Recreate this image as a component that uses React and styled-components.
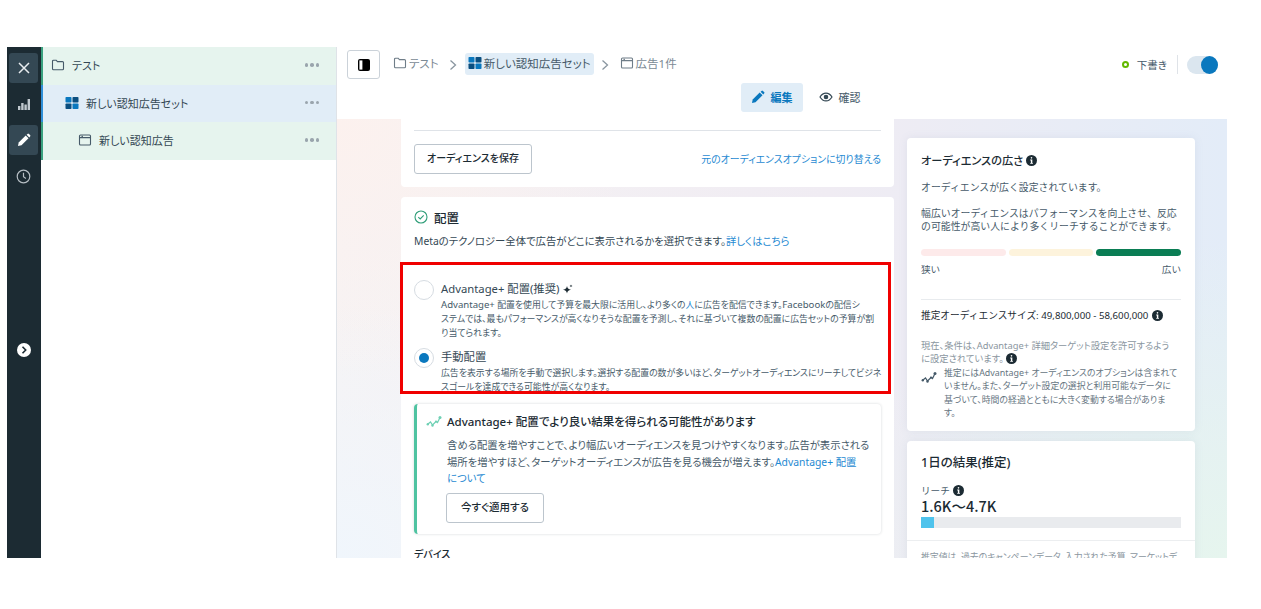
import React from "react";
import styled, {createGlobalStyle} from "styled-components";

const GlobalStyle = createGlobalStyle`
    html, body {
        margin : 0;
        padding : 0;
        background : #fff;
    }
    body {
        font-family : "Noto Sans", "Noto Sans CJK JP", sans-serif;
        color : #1c2b33;
    }
`;

const Page = styled.div`
    width : 1261px;
    height : 609px;
    padding : 47px 34px 51px 7px;
    box-sizing : border-box;
    overflow : hidden;
`;

const Frame = styled.div`
    display : flex;
    width : 100%;
    height : 100%;
`;

const Rail = styled.nav`
    width : 34px;
    flex : none;
    background : #1c2b33;
    display : flex;
    flex-direction : column;
    align-items : center;
    padding : 6px 1px 0 0;
    box-sizing : border-box;
`;

const RailButton = styled.button`
    width : 29px;
    height : 30px;
    margin-bottom : ${props => props.$gap}px;
    padding : 0;
    border : none;
    border-radius : 3px;
    background : ${props => props.$active ? "#344854" : "transparent"};
    display : flex;
    align-items : center;
    justify-content : center;
`;

const Tree = styled.aside`
    width : 295px;
    flex : none;
    border-right : 1px solid #dfe3e8;
    box-sizing : content-box;
`;

const TreeRow = styled.div`
    height : 37.7px;
    display : flex;
    align-items : center;
    gap : 7px;
    padding : 0 17px 2px ${props => props.$indent}px;
    box-sizing : border-box;
    border-left : 2px solid ${props => props.$blue ? "#2f8fd8" : "#3aa17e"};
    background : ${props => props.$blue ? "#e1edf7" : "#e6f4ee"};
    font-size : 11px;
    font-feature-settings : "palt";
    color : #344854;
`;

const TreeLabel = styled.span`
    flex : 1;
`;

const Dots = styled.span`
    display : flex;
    gap : 2px;

    i {
        width : 3.5px;
        height : 3.5px;
        border-radius : 50%;
        background : #9aa5ad;
    }
`;

const Main = styled.main`
    flex : 1;
    min-width : 0;
    display : flex;
    flex-direction : column;
`;

const TopBar = styled.header`
    height : 72px;
    flex : none;
    background : #fff;
    box-sizing : border-box;
    padding : 3px 9px 0 10px;
    font-feature-settings : "palt";
`;

const TopRow = styled.div`
    display : flex;
    align-items : center;
    height : 29px;
`;

const PanelButton = styled.button`
    width : 33px;
    height : 29px;
    padding : 0;
    margin-right : 10px;
    background : #fff;
    border : 1px solid #cbd2d9;
    border-radius : 3px;
    display : flex;
    align-items : center;
    justify-content : center;
`;

const Crumb = styled.span`
    display : flex;
    align-items : center;
    gap : 2px;
    height : 22px;
    padding : 0 3px 2px;
    box-sizing : border-box;
    margin-bottom : 1px;
    border-radius : 3px;
    font-size : 11.5px;
    color : ${props => props.$current ? "#465a69" : "#7b8a95"};
    background : ${props => props.$current ? "#e1edf7" : "transparent"};
`;

const CrumbSep = styled.span`
    width : 23px;
    display : flex;
    justify-content : center;
`;

const Status = styled.div`
    margin-left : auto;
    display : flex;
    align-items : center;
    font-size : 10.5px;
    color : #465a69;
`;

const StatusDot = styled.i`
    width : 3px;
    height : 3px;
    border : 2px solid #63b800;
    border-radius : 50%;
    margin-right : 8px;
`;

const StatusLine = styled.i`
    width : 1px;
    height : 19px;
    margin : 0 9px 0 10px;
    background : #dfe3e8;
`;

const Toggle = styled.span`
    width : 31px;
    height : 18px;
    border-radius : 9px;
    background : #dbe6ef;
    display : flex;
    justify-content : flex-end;

    i {
        width : 17px;
        height : 18px;
        border-radius : 50%;
        background : #0a78be;
    }
`;

const Tabs = styled.div`
    display : flex;
    justify-content : center;
    gap : 6px;
    padding-left : 46px;
    margin-top : 4px;
`;

const Tab = styled.span`
    width : ${props => props.$width}px;
    height : 29px;
    padding-bottom : 2px;
    box-sizing : border-box;
    display : flex;
    align-items : center;
    justify-content : center;
    gap : 6px;
    border-radius : 3px;
    font-size : 11px;
    font-weight : ${props => props.$active ? 700 : 400};
    color : ${props => props.$active ? "#0a78be" : "#465a69"};
    background : ${props => props.$active ? "#e1edf7" : "transparent"};
`;

const Content = styled.div`
    flex : 1;
    min-height : 0;
    overflow : hidden;
    display : flex;
    gap : 13px;
    padding-left : 64px;
    background :
        radial-gradient(ellipse 400px 320px at 100% 100%, #e6f5ee 0%, rgba(230,245,238,0) 100%),
        radial-gradient(ellipse 300px 260px at 0% 0%, #fcf1ee 0%, rgba(252,241,238,0) 100%),
        radial-gradient(ellipse 300px 260px at 0% 100%, #f0f6fc 0%, rgba(240,246,252,0) 100%),
        linear-gradient(90deg, #f6f3f4 0%, #f0ecf3 55%, #e3ecf8 100%);
`;

const LeftColumn = styled.div`
    width : 493px;
    flex : none;
    display : flex;
    flex-direction : column;
    gap : 10px;
    font-feature-settings : "palt";
`;

const RightColumn = styled.div`
    width : 288px;
    flex : none;
    padding-top : 19px;
    display : flex;
    flex-direction : column;
    gap : 10px;
`;

const Card = styled.section`
    background : #fff;
    border-radius : ${props => props.$flatTop ? "0 0 4px 4px" : "4px"};
    flex : none;
`;

const AudienceFoot = styled.div`
    margin : 11px 13px 0;
    padding : 13px 0 14px;
    height : 57px;
    box-sizing : border-box;
    border-top : 1px solid #dfe3e8;
    display : flex;
    justify-content : space-between;
    align-items : center;
`;

const OutlineButton = styled.button`
    width : ${props => props.$width}px;
    height : ${props => props.$height}px;
    padding : 0 0 2px;
    background : #fff;
    border : 1px solid #bcc5cd;
    border-radius : 3px;
    font-family : inherit;
    font-feature-settings : "palt";
    font-size : ${props => props.$size}px;
    font-weight : 500;
    color : #1c2b33;
`;

const Link = styled.a`
    color : #1f8ad2;
`;

const SwitchLink = styled(Link)`
    font-size : 9.9px;
`;

const PlacementHead = styled.div`
    display : flex;
    align-items : center;
    gap : 6px;
    padding : 12px 13px 0;
    height : 16px;
    font-size : 12.5px;
    font-weight : 500;
`;

const PlacementText = styled.p`
    margin : 8px 13px 0;
    font-size : 10.35px;
    line-height : 16px;
    color : #344854;
    white-space : nowrap;
`;

const RedBox = styled.div`
    margin : 13px 3px 0 -1px;
    height : 132px;
    box-sizing : border-box;
    border : 3px solid #f00000;
    padding : 13px 0 0 11px;
    overflow : hidden;
`;

const RadioRow = styled.div`
    display : flex;
    gap : 7px;
    margin-bottom : ${props => props.$gap}px;
`;

const Radio = styled.span`
    width : 20px;
    height : 20px;
    margin-top : 2px;
    box-sizing : border-box;
    flex : none;
    border : 1px solid #d6dce2;
    border-radius : 50%;
    display : flex;
    align-items : center;
    justify-content : center;

    i {
        width : 10px;
        height : 10px;
        border-radius : 50%;
        background : #0a78be;
    }
`;

const RadioBody = styled.div`
    padding-top : 2px;
`;

const RadioTitle = styled.div`
    display : flex;
    align-items : center;
    gap : 3px;
    font-size : 11.3px;
    line-height : 18px;
    color : #344854;
`;

const RadioText = styled.div`
    font-size : 8.9px;
    line-height : 14px;
    color : #465a69;
    white-space : nowrap;
`;

const RadioLatin = styled.span`
    font-size : 9.6px;
`;

const Notice = styled.div`
    margin : 10px 13px 0 13px;
    height : 130px;
    box-sizing : border-box;
    border-left : 3px solid #4fc3a1;
    border-radius : 4px;
    padding : 9px 10px 0 9px;
    box-shadow : 0 0 3px rgba(28, 43, 51, 0.18);
`;

const NoticeHead = styled.div`
    display : flex;
    align-items : center;
    gap : 5px;
    font-size : 11.5px;
    line-height : 17px;
    font-weight : 500;
`;

const NoticeBody = styled.div`
    margin : 7px 0 6px 21px;
    font-size : 10.35px;
    line-height : 16.5px;
    color : #465a69;
    white-space : nowrap;
`;

const NoticeAction = styled.div`
    padding-left : 20px;
`;

const DeviceLabel = styled.div`
    margin : 12px 13px 0;
    font-size : 10px;
    font-weight : 500;
`;

const SideCard = styled(Card)`
    padding : ${props => props.$padTop}px 14px 14px;
    height : ${props => props.$height}px;
    box-sizing : border-box;
    box-shadow : 0 0 8px rgba(120, 140, 170, 0.12);
`;

const SideTitle = styled.h3`
    margin : 0;
    display : flex;
    align-items : center;
    gap : 3px;
    font-size : ${props => props.$size}px;
    font-feature-settings : "palt";
    line-height : 17px;
    font-weight : 500;
`;

const SideText = styled.p`
    margin : ${props => props.$top}px 0 0;
    font-size : 9.9px;
    line-height : 13.5px;
    color : #465a69;
    white-space : nowrap;
`;

const FinePrint = styled(SideText)`
    font-size : ${props => props.$size}px;
    font-feature-settings : "palt";
    color : ${props => props.$color};
`;

const WidthBars = styled.div`
    display : flex;
    gap : 3px;
    margin-top : 15px;
`;

const WidthBar = styled.i`
    flex : 1;
    height : 7px;
    border-radius : 4px;
    background : ${props => props.$color};
`;

const BarLabels = styled.div`
    display : flex;
    justify-content : space-between;
    margin-top : 7px;
    font-size : 9.6px;
    line-height : 13px;
    color : #465a69;
`;

const SideRule = styled.hr`
    border : none;
    border-top : 1px solid #e8ebee;
    margin : 23px 0 0;
`;

const SizeLine = styled.div`
    margin-top : 9px;
    display : flex;
    align-items : center;
    gap : 4px;
    font-size : 9.7px;
    line-height : 14px;
    color : #1c2b33;
`;

const InlineInfo = styled.span`
    display : inline-flex;
    vertical-align : -2px;
    margin-left : 2px;
`;

const EstimateNote = styled.div`
    display : flex;
    gap : 5px;
`;

const NoteIcon = styled.span`
    width : 18px;
    padding-top : 2px;
    flex : none;
`;

const ReachLabel = styled.div`
    display : flex;
    align-items : center;
    gap : 3px;
    margin-top : 13px;
    font-size : 9.6px;
    line-height : 13px;
    color : #465a69;
`;

const ReachValue = styled.div`
    font-family : "Noto Sans CJK JP", sans-serif;
    font-size : 14.5px;
    line-height : 18px;
    font-weight : 500;
`;

const ReachTrack = styled.div`
    margin-top : 2px;
    height : 11px;
    background : #e9ebee;

    i {
        display : block;
        width : 13px;
        height : 11px;
        background : #4fc3ec;
    }
`;

const ReachRule = styled.hr`
    border : none;
    border-top : 1px solid #eceef0;
    margin : 12px -14px 0;
`;

function FolderIcon({color = "#465a69", size = 14}){
    return (
        <svg width={size} height={size} viewBox="0 0 14 14" fill="none" stroke={color} strokeWidth="1.1">
            <path d="M1.5 3.2a1 1 0 0 1 1-1h2.6l1.3 1.4h5.1a1 1 0 0 1 1 1v6.2a1 1 0 0 1-1 1h-9a1 1 0 0 1-1-1z" strokeLinejoin="round" />
        </svg>
    );
}

function AdSetIcon({size = 14}){
    return (
        <svg width={size} height={size} viewBox="0 0 14 14">
            <rect x="0.5" y="1" width="6" height="5.5" rx="0.8" fill="#0a78be" />
            <rect x="7.5" y="1" width="6" height="5.5" rx="0.8" fill="#0b4f80" />
            <rect x="0.5" y="7.5" width="6" height="5.5" rx="0.8" fill="#0b4f80" />
            <rect x="7.5" y="7.5" width="6" height="5.5" rx="0.8" fill="#0a78be" />
        </svg>
    );
}

function AdIcon({color = "#465a69", size = 14}){
    return (
        <svg width={size} height={size} viewBox="0 0 14 14" fill="none" stroke={color} strokeWidth="1.1">
            <rect x="1.5" y="2" width="11" height="10" rx="1" />
            <path d="M1.5 4.6h11M3.5 3.4h1.4" />
        </svg>
    );
}

function InfoIcon({size = 11, color = "#1c2b33"}){
    return (
        <svg width={size} height={size} viewBox="0 0 12 12">
            <circle cx="6" cy="6" r="6" fill={color} />
            <rect x="5.1" y="2.2" width="1.8" height="1.8" rx="0.9" fill="#fff" />
            <path d="M4.6 5h2.3v3.6h.7v1H4.6v-1h.7V6h-.7z" fill="#fff" />
        </svg>
    );
}

function TrendIcon({color = "#465a69"}){
    return (
        <svg width="16" height="14" viewBox="0 0 16 14" fill="none" stroke={color} strokeWidth="1.2">
            <path d="M2 9 4.5 7 6.5 10 10 6.5 11.5 7.500 14 2.500" />
            <circle cx="14" cy="2.5" r="1.5" fill={color} stroke="none" />
            <circle cx="10" cy="6.5" r="1.1" fill={color} stroke="none" />
            <circle cx="6.5" cy="10.5" r="1.2" fill={color} stroke="none" />
            <circle cx="1.8" cy="9.2" r="1.2" fill={color} stroke="none" />
        </svg>
    );
}

function PencilIcon({color = "#fff", size = 14}){
    return (
        <svg width={size} height={size} viewBox="0 0 14 14" fill={color}>
            <path d="M1 13l.7-3.5 7-7 2.8 2.8-7 7z" />
            <path d="M9.6 1.7l.9-.8a1 1 0 0 1 1.4 0l1.2 1.2a1 1 0 0 1 0 1.4l-.8.9z" />
        </svg>
    );
}

function Chevron({color = "#8a96a0"}){
    return (
        <svg width="8" height="12" viewBox="0 0 8 12" fill="none" stroke={color} strokeWidth="1.3">
            <path d="M1.5 1.5 6.5 6l-5 4.5" />
        </svg>
    );
}

function DotsMenu(){
    return <Dots><i /><i /><i /></Dots>;
}

function App(){
    return (
        <Page>
            <GlobalStyle />
            <Frame>
                <Rail>
                    <RailButton $active $gap={6}>
                        <svg width="12" height="12" viewBox="0 0 12 12" stroke="#e8ecef" strokeWidth="1.5">
                            <path d="M1 1l10 10M11 1 1 11" />
                        </svg>
                    </RailButton>
                    <RailButton $gap={6}>
                        <svg width="14" height="14" viewBox="0 0 14 14" fill="#c0c8ce">
                            <rect x="1" y="9" width="2.4" height="4" />
                            <rect x="4.2" y="6" width="2.4" height="7" />
                            <rect x="7.4" y="7.5" width="2.4" height="5.5" />
                            <rect x="10.6" y="2" width="2.4" height="11" />
                        </svg>
                    </RailButton>
                    <RailButton $active $gap={6}>
                        <PencilIcon />
                    </RailButton>
                    <RailButton $gap={144}>
                        <svg width="15" height="15" viewBox="0 0 15 15" fill="none" stroke="#b6bec4" strokeWidth="1.2">
                            <circle cx="7.5" cy="7.5" r="6.3" />
                            <path d="M7.5 3.8v4l2.4 1.6" />
                        </svg>
                    </RailButton>
                    <RailButton $gap={0}>
                        <svg width="14" height="14" viewBox="0 0 14 14">
                            <circle cx="7" cy="7" r="7" fill="#fff" />
                            <path d="M5.5 3.8 8.7 7l-3.2 3.2" fill="none" stroke="#1c2b33" strokeWidth="1.6" />
                        </svg>
                    </RailButton>
                </Rail>

                <Tree>
                    <TreeRow $indent={8}>
                        <FolderIcon /><TreeLabel>テスト</TreeLabel><DotsMenu />
                    </TreeRow>
                    <TreeRow $blue $indent={22}>
                        <AdSetIcon /><TreeLabel>新しい認知広告セット</TreeLabel><DotsMenu />
                    </TreeRow>
                    <TreeRow $indent={35}>
                        <AdIcon /><TreeLabel>新しい認知広告</TreeLabel><DotsMenu />
                    </TreeRow>
                </Tree>

                <Main>
                    <TopBar>
                        <TopRow>
                            <PanelButton>
                                <svg width="14" height="14" viewBox="0 0 14 14">
                                    <rect x="1" y="1" width="12" height="12" rx="2" fill="#000" />
                                    <rect x="2.4" y="2.4" width="3" height="9.2" fill="#fff" />
                                </svg>
                            </PanelButton>
                            <Crumb><FolderIcon color="#6f7d88" />テスト</Crumb>
                            <CrumbSep><Chevron /></CrumbSep>
                            <Crumb $current><AdSetIcon />新しい認知広告セット</Crumb>
                            <CrumbSep><Chevron /></CrumbSep>
                            <Crumb><AdIcon color="#6f7d88" />広告1件</Crumb>
                            <Status>
                                <StatusDot />下書き<StatusLine />
                                <Toggle><i /></Toggle>
                            </Status>
                        </TopRow>
                        <Tabs>
                            <Tab $active $width={62}><PencilIcon color="#0a78be" />編集</Tab>
                            <Tab $width={62}>
                                <svg width="14" height="14" viewBox="0 0 14 14" fill="none" stroke="#344854" strokeWidth="1.2">
                                    <path d="M1 7c1.6-2.6 3.6-3.9 6-3.9s4.4 1.3 6 3.9c-1.6 2.6-3.6 3.9-6 3.9S2.6 9.6 1 7z" />
                                    <circle cx="7" cy="7" r="1.7" fill="#344854" />
                                </svg>
                                確認
                            </Tab>
                        </Tabs>
                    </TopBar>

                    <Content>
                        <LeftColumn>
                            <Card $flatTop>
                                <AudienceFoot>
                                    <OutlineButton $width={118} $height={30} $size={10}>オーディエンスを保存</OutlineButton>
                                    <SwitchLink>元のオーディエンスオプションに切り替える</SwitchLink>
                                </AudienceFoot>
                            </Card>
                            <Card>
                                <PlacementHead>
                                    <svg width="14" height="14" viewBox="0 0 14 14" fill="none" stroke="#2f9d78" strokeWidth="1.1">
                                        <circle cx="7" cy="7" r="6" />
                                        <path d="M4.3 7.2 6.2 9l3.5-3.7" />
                                    </svg>
                                    配置
                                </PlacementHead>
                                <PlacementText>
                                    Metaのテクノロジー全体で広告がどこに表示されるかを選択できます。<Link>詳しくはこちら</Link>
                                </PlacementText>
                                <RedBox>
                                    <RadioRow $gap={6}>
                                        <Radio />
                                        <RadioBody>
                                            <RadioTitle>
                                                Advantage+ 配置(推奨)
                                                <svg width="11" height="11" viewBox="0 0 11 11" fill="#1c2b33">
                                                    <path d="M5 2c.5 2.4 1.2 3.1 4 3.7-2.8.6-3.5 1.3-4 3.8-.5-2.5-1.2-3.2-4-3.8C3.8 5.1 4.5 4.4 5 2z" />
                                                    <path d="M9 .5c.2.9.5 1.2 1.5 1.4-1 .2-1.3.5-1.5 1.4-.2-.9-.5-1.2-1.500-1.400C8.500 1.700 8.800 1.400 9 .5z" />
                                                </svg>
                                            </RadioTitle>
                                            <RadioText>
                                                <RadioLatin>Advantage+</RadioLatin> 配置を使用して予算を最大限に活用し、より多くの<Link>人</Link>に広告を配信できます。<RadioLatin>Facebook</RadioLatin>の配信シ<br />
                                                ステムでは、最もパフォーマンスが高くなりそうな配置を予測し、それに基づいて複数の配置に広告セットの予算が割<br />
                                                り当てられます。
                                            </RadioText>
                                        </RadioBody>
                                    </RadioRow>
                                    <RadioRow $gap={0}>
                                        <Radio><i /></Radio>
                                        <RadioBody>
                                            <RadioTitle>手動配置</RadioTitle>
                                            <RadioText>
                                                広告を表示する場所を手動で選択します。選択する配置の数が多いほど、ターゲットオーディエンスにリーチしてビジネ<br />
                                                スゴールを達成できる可能性が高くなります。
                                            </RadioText>
                                        </RadioBody>
                                    </RadioRow>
                                </RedBox>
                                <Notice>
                                    <NoticeHead>
                                        <TrendIcon color="#6fd0b4" />
                                        Advantage+ 配置でより良い結果を得られる可能性があります
                                    </NoticeHead>
                                    <NoticeBody>
                                        含める配置を増やすことで、より幅広いオーディエンスを見つけやすくなります。広告が表示される<br />
                                        場所を増やすほど、ターゲットオーディエンスが広告を見る機会が増えます。<Link>Advantage+ 配置<br />について</Link>
                                    </NoticeBody>
                                    <NoticeAction>
                                        <OutlineButton $width={98} $height={30} $size={10.5}>今すぐ適用する</OutlineButton>
                                    </NoticeAction>
                                </Notice>
                                <DeviceLabel>デバイス</DeviceLabel>
                            </Card>
                        </LeftColumn>

                        <RightColumn>
                            <SideCard $height={293} $padTop={14}>
                                <SideTitle $size={11.2}>オーディエンスの広さ <InfoIcon /></SideTitle>
                                <SideText $top={12}>オーディエンスが広く設定されています。</SideText>
                                <SideText $top={12}>
                                    幅広いオーディエンスはパフォーマンスを向上させ、反応<br />
                                    の可能性が高い人により多くリーチすることができます。
                                </SideText>
                                <WidthBars>
                                    <WidthBar $color="#fdeaea" />
                                    <WidthBar $color="#fdf3dc" />
                                    <WidthBar $color="#0a7d54" />
                                </WidthBars>
                                <BarLabels><span>狭い</span><span>広い</span></BarLabels>
                                <SideRule />
                                <SizeLine>推定オーディエンスサイズ: 49,800,000 - 58,600,000 <InfoIcon /></SizeLine>
                                <FinePrint $top={16} $size={9.3} $color="#8a96a0">
                                    現在、条件は、Advantage+ 詳細ターゲット設定を許可するよう<br />
                                    に設定されています。<InlineInfo><InfoIcon /></InlineInfo>
                                </FinePrint>
                                <EstimateNote>
                                    <NoteIcon><TrendIcon /></NoteIcon>
                                    <FinePrint $top={0} $size={8.9} $color="#66757f">
                                        推定にはAdvantage+ オーディエンスのオプションは含まれて<br />
                                        いません。また、ターゲット設定の選択と利用可能なデータに<br />
                                        基づいて、時間の経過とともに大きく変動する場合がありま<br />
                                        す。
                                    </FinePrint>
                                </EstimateNote>
                            </SideCard>
                            <SideCard $height={200} $padTop={13}>
                                <SideTitle $size={12.5}>1日の結果(推定)</SideTitle>
                                <ReachLabel>リーチ <InfoIcon /></ReachLabel>
                                <ReachValue>1.6K～4.7K</ReachValue>
                                <ReachTrack><i /></ReachTrack>
                                <ReachRule />
                                <FinePrint $top={9} $size={8.9} $color="#8a96a0">
                                    推定値は、過去のキャンペーンデータ、入力された予算、マーケットデ
                                </FinePrint>
                            </SideCard>
                        </RightColumn>
                    </Content>
                </Main>
            </Frame>
        </Page>
    );
}

export default App;
